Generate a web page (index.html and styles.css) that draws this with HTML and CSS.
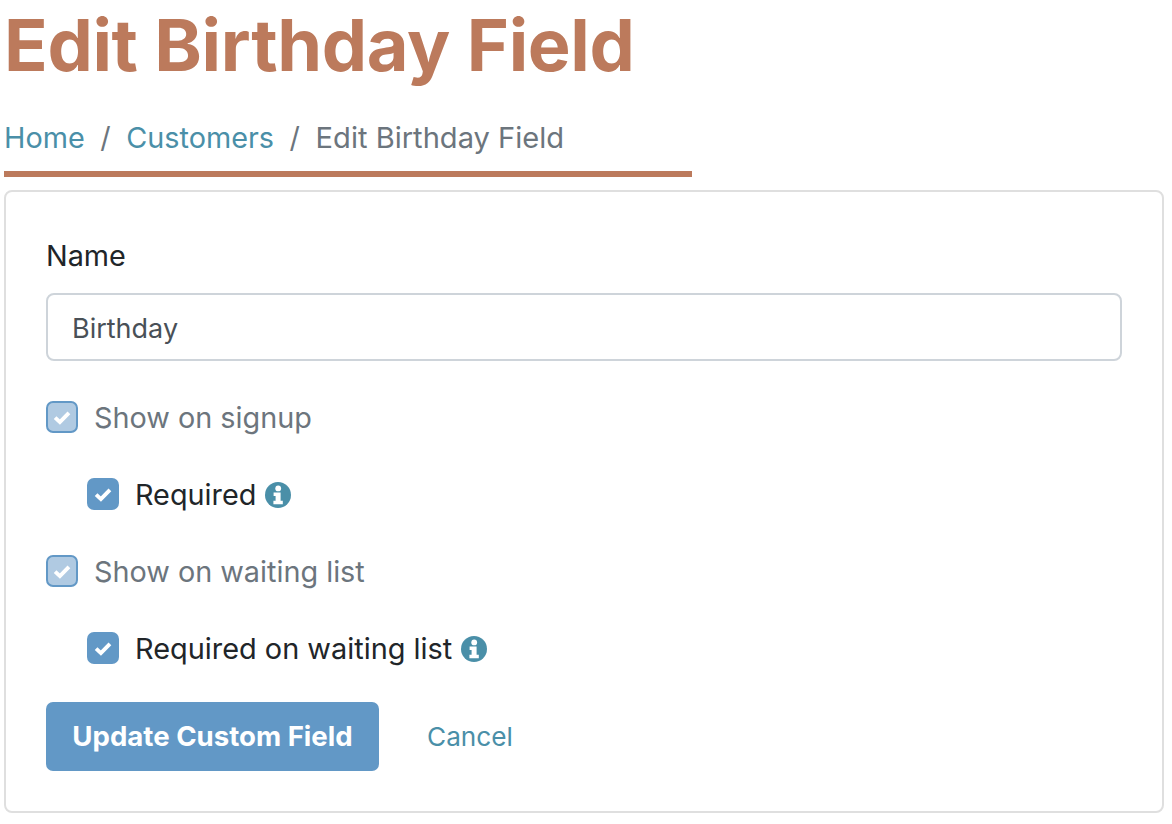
FILE: index.html
```html
<!DOCTYPE html>
<html lang="en">
<head>
<meta charset="utf-8">
<title>Edit Birthday Field</title>
<link rel="stylesheet" href="styles.css">
</head>
<body>
<header class="page-head">
  <h1 class="title">Edit Birthday Field</h1>
  <nav class="crumbs">
    <a class="link" href="#">Home</a><span class="sep">/</span><a class="link" href="#">Customers</a><span class="sep">/</span><span class="current">Edit Birthday Field</span>
  </nav>
</header>
<main class="card">
  <form class="form">
    <label class="field-label" for="name">Name</label>
    <input class="input" id="name" type="text" value="Birthday">
    <div class="check muted">
      <span class="box faded"><svg class="tick" viewBox="0 0 16 16"><path d="M3.4 8.4 6.6 11.4 12.6 5.2" /></svg></span>
      <span>Show on signup</span>
    </div>
    <div class="check sub">
      <span class="box"><svg class="tick" viewBox="0 0 16 16"><path d="M3.4 8.4 6.6 11.4 12.6 5.2" /></svg></span>
      <span>Required</span>
      <svg class="info" viewBox="0 0 26 26"><circle cx="13" cy="13" r="13" fill="#4a8fa8"/><circle cx="13.2" cy="6.4" r="2.9" fill="#fff"/><path d="M8.6 10.6h7v8.2h2.2v3.4H8.4v-3.4h2.2v-4.8h-2z" fill="#fff"/></svg>
    </div>
    <div class="check muted">
      <span class="box faded"><svg class="tick" viewBox="0 0 16 16"><path d="M3.4 8.4 6.6 11.4 12.6 5.2" /></svg></span>
      <span>Show on waiting list</span>
    </div>
    <div class="check sub">
      <span class="box"><svg class="tick" viewBox="0 0 16 16"><path d="M3.4 8.4 6.6 11.4 12.6 5.2" /></svg></span>
      <span class="wide">Required on waiting list</span>
      <svg class="info" viewBox="0 0 26 26"><circle cx="13" cy="13" r="13" fill="#4a8fa8"/><circle cx="13.2" cy="6.4" r="2.9" fill="#fff"/><path d="M8.6 10.6h7v8.2h2.2v3.4H8.4v-3.4h2.2v-4.8h-2z" fill="#fff"/></svg>
    </div>
    <div class="actions">
      <button class="btn" type="button">Update Custom Field</button>
      <a class="link cancel" href="#">Cancel</a>
    </div>
  </form>
</main>
</body>
</html>
```
FILE: styles.css
```css
* { box-sizing: border-box; }
html, body { margin: 0; padding: 0; }
body {
  background: #fff;
  color: #212529;
  font-family: Inter, "Liberation Sans", sans-serif;
  font-size: 28.8px;
  line-height: 42px;
  padding: 0 8px 0 4px;
  height: 824px;
  overflow: hidden;
}
.page-head { width: 688px; border-bottom: 6px solid #bc7a5c; height: 177px; }
.title {
  margin: 0;
  color: #bc7a5c;
  font-size: 72px;
  font-weight: 700;
  letter-spacing: -0.35px;
  line-height: 90px;
  white-space: nowrap;
}
.crumbs { display: flex; align-items: center; padding-top: 27px; white-space: nowrap; color: #6c757d; }
.link { color: #4a8fa8; text-decoration: none; }
.sep { color: #6c757d; padding: 0 15.6px; }
.current { color: #6c757d; font-size: 29.1px; }
.card {
  margin-top: 13px;
  height: 623px;
  border: 2px solid #dfdfdf;
  border-radius: 8px;
  padding: 41px 40px 40px;
}
.form { display: flex; flex-direction: column; }
.field-label { display: block; height: 42px; margin-top: 2px; margin-bottom: 16px; }
.input {
  height: 68px;
  width: 100%;
  border: 2px solid #ced4da;
  border-radius: 8px;
  padding: 2px 24px 0;
  font: inherit;
  font-size: 27px;
  color: #495057;
  background: #fff;
  margin-bottom: 36px;
}
.check { display: flex; align-items: center; height: 42px; margin-bottom: 35px; }
.muted { color: #6c757d; }
.sub { padding-left: 41px; color: #212529; }
.wide { font-size: 28.9px; }
.box {
  flex: none;
  width: 32px;
  height: 32px;
  margin-right: 16px;
  margin-bottom: 2px;
  border-radius: 7px;
  background: #6298c6;
  display: flex;
  align-items: center;
  justify-content: center;
}
.box.faded { background: #b0cae2; border: 2px solid #6298c6; }
.tick { width: 24px; height: 24px; fill: none; stroke: #fff; stroke-width: 2.6; }
.info { width: 26px; height: 26px; margin-left: 9px; flex: none; }
.actions { display: flex; align-items: center; margin-top: -3px; }
.btn {
  height: 69px;
  width: 333px;
  border: 0;
  border-radius: 7px;
  background: #6298c6;
  color: #fff;
  font: 700 27.6px/42px Inter, "Liberation Sans", sans-serif;
  padding: 0 0 2px;
}
.cancel { margin-left: 48px; font-size: 26.2px; }
```
